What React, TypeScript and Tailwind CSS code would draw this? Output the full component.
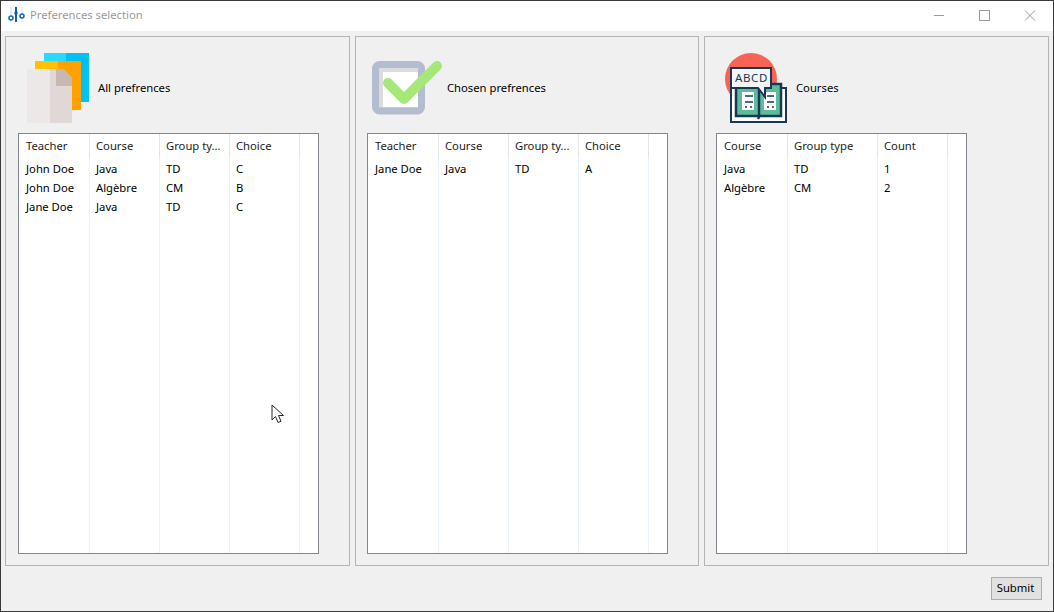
import React from 'react';

const font = "font-['Noto_Sans','Open_Sans',sans-serif]";

const AllIcon = () => (
  <svg width="76" height="72" viewBox="0 0 76 72" className="block">
    <rect x="22" y="0" width="22" height="49" fill="#29d9fb" />
    <rect x="44" y="0" width="23" height="49" fill="#00c1f3" />
    <rect x="13" y="8" width="23" height="49" fill="#ffc200" />
    <rect x="36" y="8" width="23" height="49" fill="#ffa100" />
    <rect x="5" y="16" width="23" height="54" fill="#ece8e7" />
    <path d="M28 16h13l9 9v45H28z" fill="#e0d8d6" />
    <path d="M34 16h7l9 9v8H34z" fill="#c7b8b4" />
  </svg>
);

const CheckIcon = () => (
  <svg width="76" height="72" viewBox="0 0 76 72" className="block">
    <rect x="3.5" y="11.5" width="46" height="46.5" rx="4" fill="#dcdcdf" stroke="#b4bccf" strokeWidth="7" />
    <rect x="11" y="19" width="35" height="35" fill="#ffffff" />
    <path d="M16 30L32 46L65 13" fill="none" stroke="#a5e878" strokeWidth="10" strokeLinecap="round" strokeLinejoin="round" />
  </svg>
);

const BookIcon = () => (
  <svg width="76" height="72" viewBox="0 0 76 72" className="block">
    <circle cx="30" cy="26" r="26" fill="#f76354" />
    <rect x="10" y="35" width="55" height="34" fill="#ffffff" stroke="#173a52" strokeWidth="2" />
    <rect x="15" y="31" width="45" height="32" fill="#5fbb9d" stroke="#173a52" strokeWidth="2.5" />
    <rect x="21" y="39" width="12" height="18" fill="#ffffff" />
    <rect x="43" y="39" width="12" height="18" fill="#ffffff" />
    <path d="M38 31v33l-1 2" stroke="#173a52" strokeWidth="2.5" fill="none" />
    <path d="M24 43h8M24 49h8M24 54h2M29 54h2M46 43h7M46 49h7M46 54h2M51 54h2" stroke="#173a52" strokeWidth="1.5" />
    <path d="M10 15h40v20h-6v9l-7-9H10z" fill="#f3f5f5" stroke="#173a52" strokeWidth="2" />
    <text x="30.5" y="29" textAnchor="middle" fontSize="11.5" fontFamily="Noto Sans, sans-serif" fill="#173a52" letterSpacing="0.6">ABCD</text>
  </svg>
);

type PanelProps = {
  icon: React.ReactNode;
  title: string;
  columns: string[];
  widths: string[];
  rows: string[][];
  panelClass: string;
  iconClass: string;
  tableClass: string;
  textGap: string;
  cursor?: boolean;
};

const Panel = ({ icon, title, columns, widths, rows, panelClass, iconClass, tableClass, textGap, cursor }: PanelProps) => (
  <section className={`${panelClass} h-[530px] border border-[#b4b4b4] pt-[16px] flex flex-col`}>
    <div className="h-[80px] flex items-start">
      <div className={`${iconClass} w-[76px] h-[72px]`}>{icon}</div>
      <span className={`${textGap} mt-[27px] text-[11.25px] leading-[16px] text-black whitespace-nowrap`}>{title}</span>
    </div>
    <div className={`${tableClass} relative h-[421px] border border-[#82878f] bg-white flex pl-[1px]`}>
      {columns.map((col, i) => (
        <div key={col} className={`${widths[i]} h-full border-r border-[#e9f1fa] flex flex-col`}>
          <div className="h-[24px] border-r border-[#e4e4e4] -mr-px pl-[6px] pt-[4px] text-[11.25px] leading-[16px] text-[#1c1c1c] whitespace-nowrap mb-[1px]">
            {col}
          </div>
          {rows.map((row, j) => (
            <div key={j} className="h-[19px] pl-[6px] text-[11.25px] leading-[19px] text-black whitespace-nowrap">
              {row[i]}
            </div>
          ))}
        </div>
      ))}
      {cursor && (
        <svg width="14" height="20" viewBox="0 0 14 20" className="absolute left-[252px] top-[270px]">
          <path d="M1 1v15l3.5-3.5 2.5 6 3-1.2-2.5-5.8H12.5z" fill="#ffffff" stroke="#26262e" strokeWidth="1" />
        </svg>
      )}
    </div>
  </section>
);

const seventy = ['w-[70px]', 'w-[70px]', 'w-[70px]', 'w-[70px]'];

export default function App() {
  return (
    <div className={`${font} w-[1054px] h-[612px] bg-[#f0f0f0] border border-[#3a3a3a] flex flex-col overflow-hidden`}>
      <header className="h-[30px] bg-white flex items-center shrink-0">
        <svg width="18" height="20" viewBox="0 0 18 20" className="ml-[7px]">
          <path d="M3 1v15M14 1v15" stroke="#cfdcee" strokeWidth="1" />
          <path d="M8 1v15" stroke="#0f5cb0" strokeWidth="2" />
          <circle cx="3" cy="12" r="2" fill="#ffffff" stroke="#1668c4" strokeWidth="1.6" />
          <circle cx="14" cy="10" r="2" fill="#ffffff" stroke="#1668c4" strokeWidth="1.6" />
          <circle cx="8" cy="7" r="1.8" fill="#0f5cb0" />
        </svg>
        <span className="ml-[4px] -mt-[2px] text-[11.25px] text-[#9a9a9a]">Preferences selection</span>
        <div className="ml-auto flex items-center">
          <svg width="46" height="30" viewBox="0 0 46 30">
            <path d="M19 14.5h10" stroke="#9a9a9a" strokeWidth="1" />
          </svg>
          <svg width="46" height="30" viewBox="0 0 46 30">
            <rect x="18.5" y="9.5" width="10" height="10" fill="none" stroke="#9a9a9a" strokeWidth="1" />
          </svg>
          <svg width="46" height="30" viewBox="0 0 46 30">
            <path d="M18 9.5l10 10M28 9.5l-10 10" stroke="#9a9a9a" strokeWidth="1" />
          </svg>
        </div>
      </header>
      <main className="flex gap-[5px] pl-[4px] pt-[5px] shrink-0">
        <Panel
          icon={<AllIcon />}
          title="All prefrences"
          panelClass="w-[345px] pl-[12px]"
          iconClass="ml-[4px]"
          tableClass="w-[301px]"
          textGap="ml-0"
          columns={['Teacher', 'Course', 'Group ty...', 'Choice']}
          widths={seventy}
          rows={[
            ['John Doe', 'Java', 'TD', 'C'],
            ['John Doe', 'Algèbre', 'CM', 'B'],
            ['Jane Doe', 'Java', 'TD', 'C'],
          ]}
          cursor
        />
        <Panel
          icon={<CheckIcon />}
          title="Chosen prefrences"
          panelClass="w-[344px] pl-[11px]"
          iconClass="ml-[5px]"
          tableClass="w-[301px]"
          textGap="-ml-[1px]"
          columns={['Teacher', 'Course', 'Group ty...', 'Choice']}
          widths={seventy}
          rows={[['Jane Doe', 'Java', 'TD', 'A']]}
        />
        <Panel
          icon={<BookIcon />}
          title="Courses"
          panelClass="w-[345px] pl-[11px]"
          iconClass="ml-[5px]"
          tableClass="w-[251px]"
          textGap="-ml-[1px]"
          columns={['Course', 'Group type', 'Count']}
          widths={['w-[70px]', 'w-[90px]', 'w-[70px]']}
          rows={[
            ['Java', 'TD', '1'],
            ['Algèbre', 'CM', '2'],
          ]}
        />
      </main>
      <footer className="flex justify-end pr-[11px] pt-[11px]">
        <button className="w-[51px] h-[23px] bg-[#e1e1e1] border border-[#adadad] pr-[2px] pb-[2px] text-[11.25px] leading-[19px] text-black">
          Submit
        </button>
      </footer>
    </div>
  );
}
